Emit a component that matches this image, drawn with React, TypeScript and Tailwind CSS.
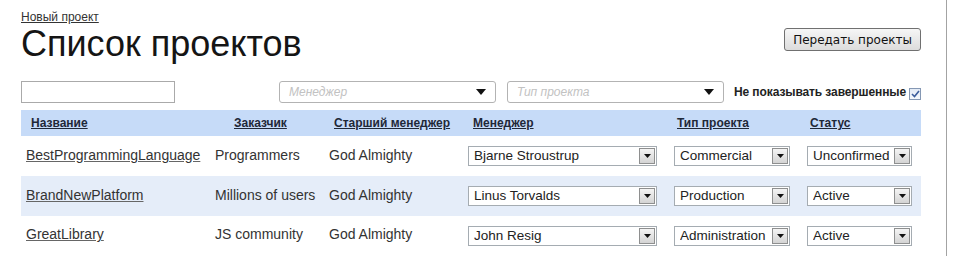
import React from "react";

type Project = {
  name: string;
  customer: string;
  senior: string;
  manager: string;
  type: string;
  status: string;
};

const projects: Project[] = [
  {
    name: "BestProgrammingLanguage",
    customer: "Programmers",
    senior: "God Almighty",
    manager: "Bjarne Stroustrup",
    type: "Commercial",
    status: "Unconfirmed",
  },
  {
    name: "BrandNewPlatform",
    customer: "Millions of users",
    senior: "God Almighty",
    manager: "Linus Torvalds",
    type: "Production",
    status: "Active",
  },
  {
    name: "GreatLibrary",
    customer: "JS community",
    senior: "God Almighty",
    manager: "John Resig",
    type: "Administration",
    status: "Active",
  },
];

const arial = "font-['Liberation_Sans',Arial,sans-serif]";

// old-school select box with the little grey arrow button
const RowSelect = ({ value, width }: { value: string; width: string }) => (
  <div
    className={`flex items-center h-[20px] ${width} border border-[#a5acb2] bg-white pl-[5px] pr-[1px] text-[13.5px] text-[#222]`}
  >
    <span className="flex-1 whitespace-nowrap overflow-hidden leading-none">{value}</span>
    <span className="shrink-0 flex items-center justify-center w-[16px] h-[16px] border border-[#8e8f8f] bg-gradient-to-b from-[#f4f4f4] to-[#d4d4d4]">
      <svg width="7" height="4" viewBox="0 0 7 4">
        <polygon points="0,0 7,0 3.5,4" fill="#111" />
      </svg>
    </span>
  </div>
);

const FilterSelect = ({ placeholder }: { placeholder: string }) => (
  <div className="flex items-center w-[217px] h-[22px] border border-[#b3b3b3] rounded-[3px] bg-white pl-[9px] pr-[9px]">
    <span className="flex-1 text-[12px] italic text-[#c2c2c2] leading-none">
      {placeholder}
    </span>
    <svg width="10" height="6" viewBox="0 0 10 6">
      <polygon points="0,0 10,0 5,6" fill="#111" />
    </svg>
  </div>
);

const headers = [
  { label: "Название", pad: "pl-[10px]" },
  { label: "Заказчик", pad: "pl-[24px]" },
  { label: "Старший менеджер", pad: "pl-[10px]" },
  { label: "Менеджер", pad: "pl-[10px]" },
  { label: "Тип проекта", pad: "pl-[8px]" },
  { label: "Статус", pad: "pl-[8px]" },
];

export default function App() {
  return (
    <div className={`flex h-[256px] bg-white ${arial}`}>
      <div className="w-[947px] h-full border-r border-[#a3a3a3] pl-[21px] pr-[25px] pt-[9px]">
        <div className="flex justify-between items-start">
          <div>
            <a href="#" className="block text-[12px] leading-[16px] text-[#333] underline">
              Новый проект
            </a>
            <h1 className="mt-[1px] text-[36px] leading-[36px] text-[#151515] font-normal">
              Список проектов
            </h1>
          </div>
          <button className="mt-[19px] h-[23px] px-[8px] border border-[#707070] rounded-[3px] bg-gradient-to-b from-[#f6f6f6] to-[#dcdcdc] text-[12px] text-[#111] font-['DejaVu_Sans',Tahoma,sans-serif]">
            Передать проекты
          </button>
        </div>

        <div className="flex items-center mt-[19px] h-[22px]">
          <input
            type="text"
            className="shrink-0 w-[154px] h-[22px] border border-[#aaa] bg-white outline-none"
          />
          <div className="shrink-0 ml-[104px]">
            <FilterSelect placeholder="Менеджер" />
          </div>
          <div className="shrink-0 ml-[11px]">
            <FilterSelect placeholder="Тип проекта" />
          </div>
          <label className="ml-[10px] shrink-0 whitespace-nowrap flex items-center text-[12px] font-bold text-[#222] tracking-[-0.1px]">
            Не показывать завершенные
            <span className="ml-[3px] mt-[3px] flex items-center justify-center w-[12px] h-[12px] border border-[#8598b4] bg-gradient-to-b from-[#e3ebf6] to-[#f4f8fc]">
              <svg width="9" height="8" viewBox="0 0 9 8">
                <path d="M1 4 L3.5 6.5 L8 1" stroke="#3b5d9c" strokeWidth="1.6" fill="none" />
              </svg>
            </span>
          </label>
        </div>

        <table className="mt-[7px] w-[900px] table-fixed border-collapse">
          <colgroup>
            <col className="w-[189px]" />
            <col className="w-[114px]" />
            <col className="w-[139px]" />
            <col className="w-[206px]" />
            <col className="w-[133px]" />
            <col className="w-[119px]" />
          </colgroup>
          <thead>
            <tr className="h-[26px] bg-[#c6dbf8]">
              {headers.map((h) => (
                <th
                  key={h.label}
                  className={`${h.pad} text-left text-[12px] font-bold text-[#1f2838] underline`}
                >
                  {h.label}
                </th>
              ))}
            </tr>
          </thead>
          <tbody>
            {projects.map((p, i) => (
              <tr
                key={p.name}
                className={`h-[40px] text-[14px] text-[#333] ${
                  i % 2 === 1 ? "bg-[#e5edf9]" : "bg-white"
                } ${i === projects.length - 1 ? "border-b border-[#e2e2e2]" : ""}`}
              >
                <td className="pl-[5px] pb-[2px] whitespace-nowrap">
                  <a href="#" className="underline decoration-[#666]">
                    {p.name}
                  </a>
                </td>
                <td className="pl-[5px] pb-[2px] whitespace-nowrap">{p.customer}</td>
                <td className="pl-[5px] pb-[2px] whitespace-nowrap">{p.senior}</td>
                <td className="pl-[5px]">
                  <RowSelect value={p.manager} width="w-[189px]" />
                </td>
                <td className="pl-[5px]">
                  <RowSelect value={p.type} width="w-[116px]" />
                </td>
                <td className="pl-[5px]">
                  <RowSelect value={p.status} width="w-[105px]" />
                </td>
              </tr>
            ))}
          </tbody>
        </table>
      </div>
    </div>
  );
}
